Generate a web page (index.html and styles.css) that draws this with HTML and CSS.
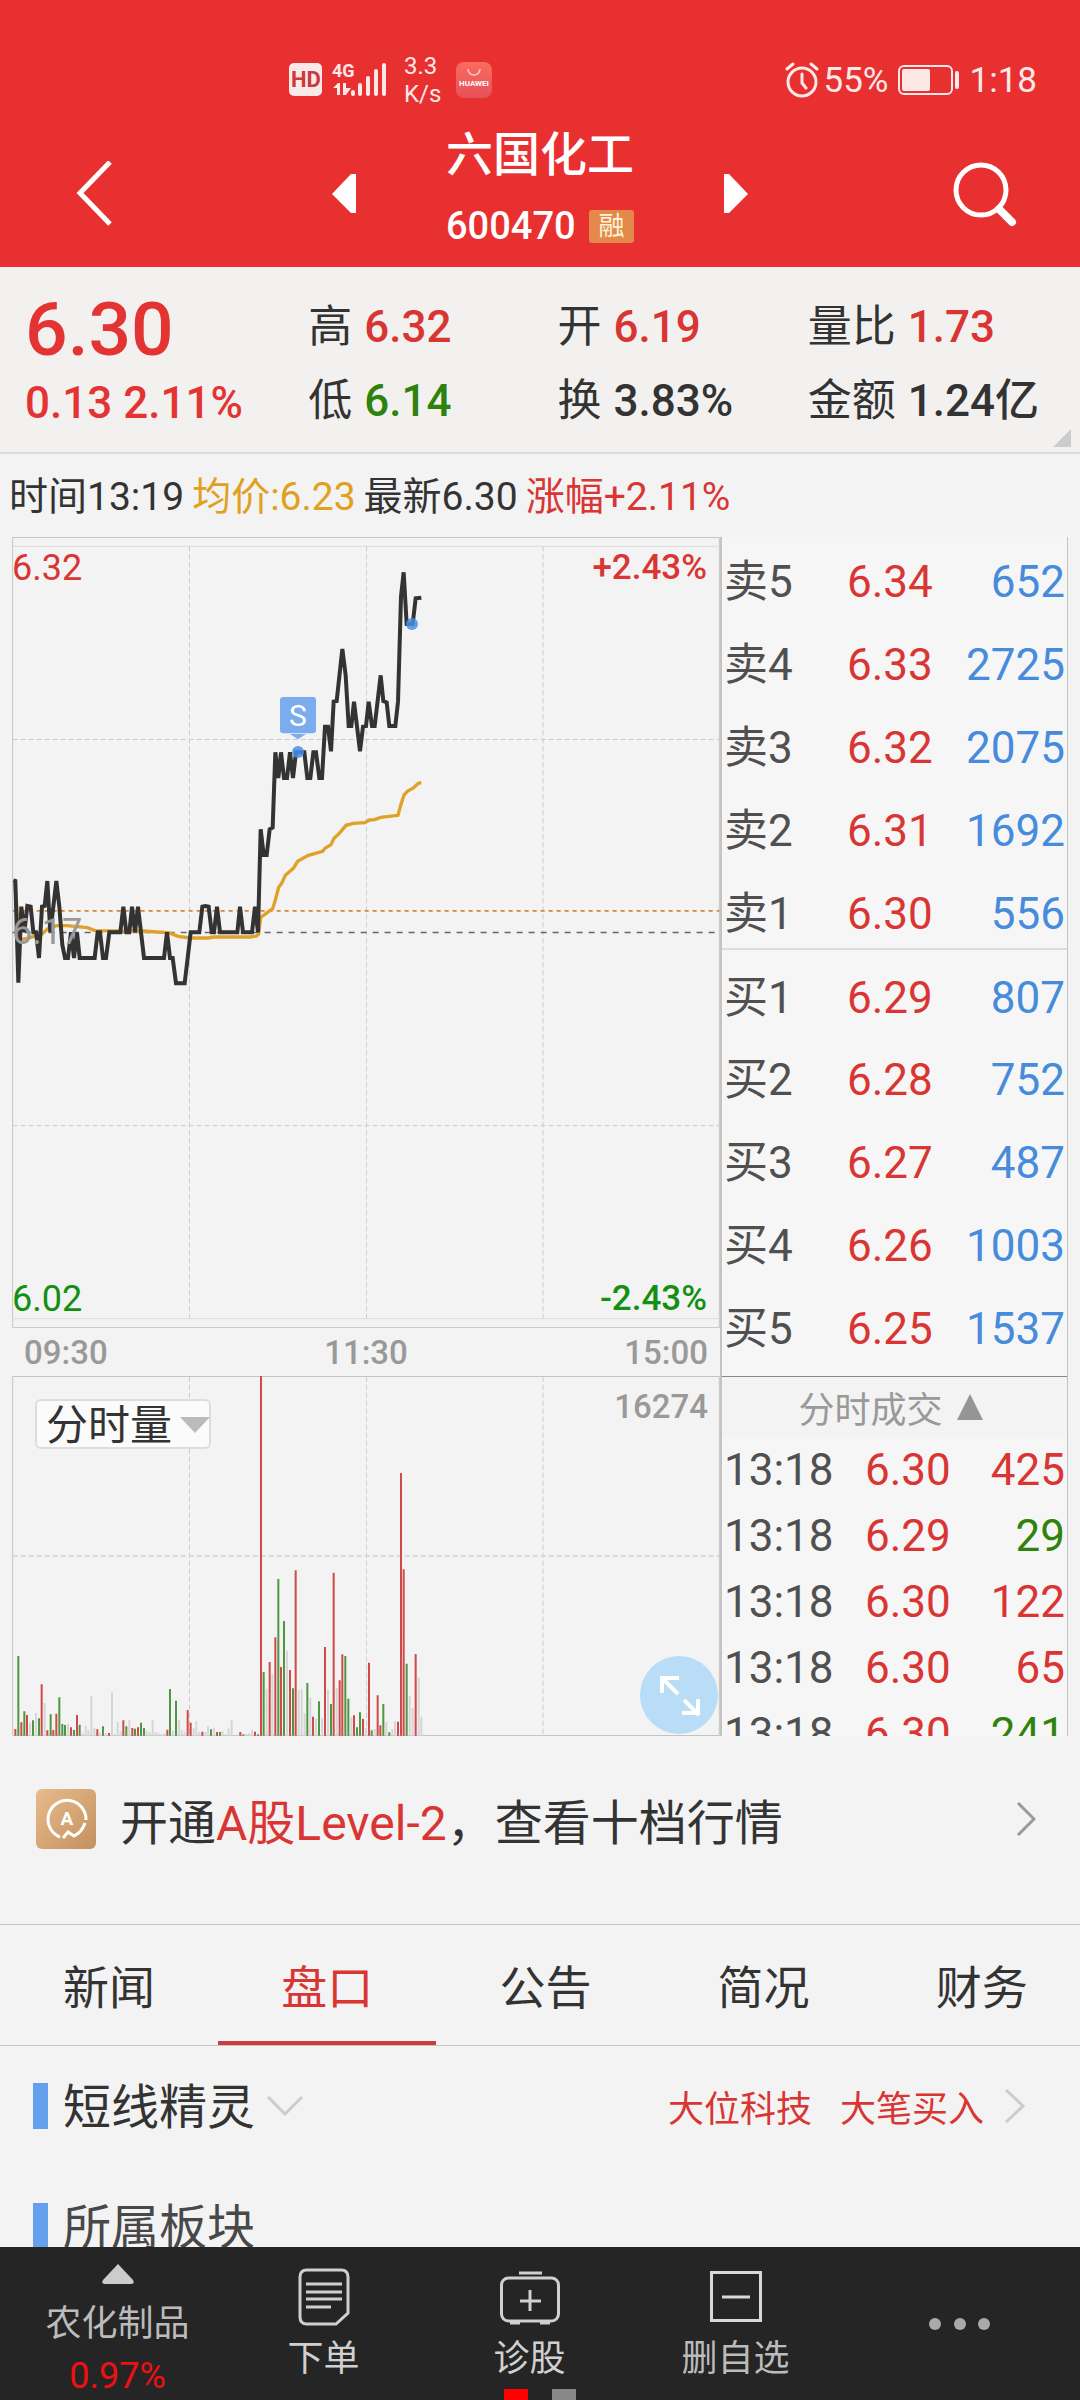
FILE: index.html
```html
<!DOCTYPE html>
<html lang="zh-CN">
<head>
<meta charset="utf-8">
<meta name="viewport" content="width=device-width">
<title>六国化工 600470</title>
<link rel="stylesheet" href="styles.css">
</head>
<body>
<header class="top">
  <div class="status">
    <div class="status-side">
      <svg class="net" width="98" height="36" viewBox="0 0 98 36" aria-hidden="true">
        <rect x="0" y="1" width="33" height="33" rx="5" fill="#fde8e8"/>
        <text x="17" y="25" class="hd" text-anchor="middle">HD</text>
        <text x="43" y="15" class="g4">4G</text>
        <g fill="#fde8e8">
          <path d="M44 26L49 21H51V33H48V26ZM54 21H57V26H62L57 33H54Z"/>
          <rect x="62" y="28" width="4" height="6" rx="2"/>
          <rect x="69" y="21" width="4" height="13" rx="2"/>
          <rect x="77" y="14" width="4" height="20" rx="2"/>
          <rect x="85" y="7" width="4" height="27" rx="2"/>
          <rect x="93" y="1" width="4" height="33" rx="2"/>
        </g>
      </svg>
      <span class="rate">3.3<br>K/s</span>
      <svg class="store" width="36" height="36" viewBox="0 0 36 36" aria-hidden="true">
        <defs><linearGradient id="store" x1="0" y1="0" x2="0" y2="1"><stop offset="0" stop-color="#fb6b5e"/><stop offset="1" stop-color="#e6505a"/></linearGradient></defs>
        <rect width="36" height="36" rx="8" fill="url(#store)"/>
        <path d="M12 7a6 6 0 0 0 12 0" fill="none" stroke="#fcc" stroke-width="1.5"/>
        <text x="18" y="24" class="brand" text-anchor="middle">HUAWEI</text>
      </svg>
    </div>
    <div class="status-side">
      <svg width="34" height="36" viewBox="0 0 34 36" fill="none" stroke="#fde8e8" stroke-width="3" stroke-linecap="round" aria-hidden="true">
        <circle cx="17" cy="20" r="14"/><path d="M17 12v9l4 5M2 7l6-5M32 7l-6-5"/>
      </svg>
      <span class="pct">55%</span>
      <svg class="batt" width="61" height="30" viewBox="0 0 61 30" aria-hidden="true">
        <rect x="1" y="1" width="53" height="28" rx="5" fill="none" stroke="#fde8e8" stroke-width="2"/>
        <rect x="4" y="4" width="28" height="22" rx="2" fill="#fde8e8"/><rect x="57" y="6" width="4" height="18" rx="2" fill="#fde8e8"/>
      </svg>
      <span class="clock">1:18</span>
    </div>
  </div>
  <div class="titlebar">
    <button class="corner" aria-label="返回"><svg width="40" height="66" viewBox="0 0 40 66" fill="none" stroke="#fff" stroke-width="5"><path d="M35 1L5 32L35 63"/></svg></button>
    <div class="switcher">
      <button aria-label="上一只"><svg width="24" height="39" viewBox="0 0 24 39"><path d="M24 0V39H19L0 20L19 0Z" fill="#fff"/></svg></button>
      <div class="title">
        <h1>六国化工</h1>
        <p>600470<span class="tag">融</span></p>
      </div>
      <button aria-label="下一只"><svg width="24" height="39" viewBox="0 0 24 39"><path d="M0 0V39H5L24 20L5 0Z" fill="#fff"/></svg></button>
    </div>
    <button class="corner" aria-label="搜索"><svg width="64" height="68" viewBox="0 0 64 68" fill="none" stroke="#fff"><circle cx="28" cy="30" r="25" stroke-width="5"/><path d="M46 49L59 62" stroke-width="8" stroke-linecap="round"/></svg></button>
  </div>
</header>

<main>
  <section class="quote">
    <div class="last"><strong>6.30</strong><span>0.13 2.11%</span></div>
    <dl><div><dt>高</dt><dd class="up">6.32</dd></div><div><dt>低</dt><dd class="down">6.14</dd></div></dl>
    <dl><div><dt>开</dt><dd class="up">6.19</dd></div><div><dt>换</dt><dd>3.83%</dd></div></dl>
    <dl><div><dt>量比</dt><dd class="up">1.73</dd></div><div><dt>金额</dt><dd>1.24亿</dd></div></dl>
    <i class="fold"></i>
  </section>

  <p class="info"><span>时间13:19</span><span class="avg">均价:6.23</span><span>最新6.30</span><span class="up">涨幅+2.11%</span></p>

  <section class="market">
    <div class="charts">
      <div class="price">
        <svg class="plot" viewBox="36 21 2124 2373" preserveAspectRatio="none" aria-label="分时走势">
          <g fill="none" stroke-width="3">
            <path d="M38 22.500V2393H2158V22.500Z" stroke="#c4c4c4"/>
            <path d="M38 49H2158M38 2366H2158" stroke="#dcdcdc"/>
            <path d="M38 628.500H2158M38 1787H2158M568.500 49V2366M1099.500 49V2366M1629.500 49V2366" stroke="#ccc" stroke-dasharray="15 9"/>
            <path d="M38 1142.500H2158" stroke="#d9853b" stroke-width="5" stroke-dasharray="12 12"/>
            <path d="M38 1207.500H2158" stroke="#666" stroke-width="5" stroke-dasharray="18 18"/>
          </g>
          <polyline class="avg-line" points="44,1053 52,1150 58,1230 80,1225 125,1213 145,1195 170,1187 200,1187 262,1193 285,1202 430,1203 470,1206 505,1208 535,1219 570,1224 625,1224 640,1221 750,1221 770,1218 776,1212 782,1162 818,1136 826,1110 836,1072 845,1060 856,1036 880,1015 893,994 925,976 968,964 976,954 993,944 1002,925 1018,910 1038,886 1060,880 1095,878 1108,870 1124,869 1142,862 1194,856 1202,826 1212,795 1222,784 1240,774 1255,760 1264,758"/>
          <polyline class="price-line" points="40,1051 46,1053 55,1358 64,1130 73,1207 82,1128 92,1130 100,1207 108,1207 117,1284 126,1130 134,1128 142,1053 151,1207 160,1130 169,1053 178,1130 187,1245 195,1284 204,1284 213,1207 222,1284 231,1207 239,1284 284,1284 293,1207 300,1207 309,1284 318,1284 328,1207 361,1207 370,1130 379,1207 388,1207 396,1130 405,1207 414,1130 423,1207 432,1284 492,1284 501,1207 510,1284 518,1284 528,1360 554,1360 563,1284 572,1207 598,1207 607,1130 616,1128 626,1130 635,1207 642,1207 651,1130 660,1207 712,1207 720,1130 729,1207 756,1207 765,1130 774,1207 782,898 791,975 800,975 809,898 818,893 826,667 835,744 843,667 852,744 861,744 870,667 879,744 888,667 913,667 922,744 931,744 940,667 948,667 958,744 966,744 975,590 984,590 993,664 1001,515 1010,513 1027,357 1037,436 1046,588 1054,588 1062,515 1080,664 1089,590 1098,588 1106,515 1116,588 1124,588 1142,436 1150,513 1160,517 1168,588 1186,588 1194,515 1203,200 1211,127 1220,282 1238,282 1247,205 1264,203"/>
          <g fill="#4a8fe3" fill-opacity=".85"><circle cx="894" cy="666" r="18"/><circle cx="1236" cy="282" r="18"/></g>
          <rect x="840" y="501" width="108" height="109" rx="10" fill="#7aacee"/><path d="M870 612H918L894 628Z" fill="#7aacee"/>
          <text x="894" y="588" class="flag" text-anchor="middle">S</text>
        </svg>
        <span class="lab high up">6.32</span><span class="lab high end up">+2.43%</span>
        <span class="lab mid">6.17</span>
        <span class="lab low">6.02</span><span class="lab low end">-2.43%</span>
      </div>
      <div class="axis"><span>09:30</span><span>11:30</span><span>15:00</span></div>
      <div class="volume">
        <svg class="plot" viewBox="36 348 2124 1080" preserveAspectRatio="none" aria-label="成交量">
          <g fill="none" stroke-width="3">
            <path d="M38 349.500V1426.500H2158V349.500Z" stroke="#c4c4c4"/>
            <path d="M568.500 350V1426M1099.500 350V1426M1629.500 350V1426" stroke="#ccc" stroke-dasharray="15 9"/>
            <path d="M38 888H2158" stroke="#d4d4d4" stroke-width="5" stroke-dasharray="15 9"/>
          </g>
          <g fill="none" stroke-width="6">
            <path stroke="#d6d6d6" d="M90 1427V1388M108 1427V1359M134 1427V1329M204 1427V1392M248 1427V1420M257 1427V1397M265 1427V1410M274 1427V1308M283 1427V1403M300 1427V1418M318 1427V1420M336 1427V1297M345 1427V1423M353 1427V1385M362 1427V1414M388 1427V1381M440 1427V1412M449 1427V1416M458 1427V1380M467 1427V1416M475 1427V1420M484 1427V1422M493 1427V1420M519 1427V1413M537 1427V1380M545 1427V1410M554 1427V1415M581 1427V1405M589 1427V1384M598 1427V1415M616 1427V1416M624 1427V1399M642 1427V1404M668 1427V1414M677 1427V1422M686 1427V1405M695 1427V1379M712 1427V1423M739 1427V1422M747 1427V1419M756 1427V1410M800 1427V1286M817 1427V1242M861 1427V1172M896 1427V1290M905 1427V1288M914 1427V1360M931 1427V1314M948 1427V1376M966 1427V1374M984 1427V1290M1010 1427V1284M1054 1427V1370M1098 1427V1404M1124 1427V1407M1159 1427V1385M1177 1427V1407M1185 1427V1384M1229 1427V1309M1238 1427V1344M1256 1427V1252M1264 1427V1370"/>
            <path stroke="#cf4a48" d="M46 1427V1407M64 1427V1387M81 1427V1365M125 1427V1273M142 1427V1411M160 1427V1410M169 1427V1361M213 1427V1402M231 1427V1365M292 1427V1408M327 1427V1419M370 1427V1381M397 1427V1404M414 1427V1402M502 1427V1409M563 1427V1350M572 1427V1388M607 1427V1415M651 1427V1416M721 1427V1416M765 1427V1415M783 1427V348M809 1427V1206M826 1427V1132M843 1427V1221M870 1427V1230M887 1427V931M939 1427V1370M975 1427V1161M1001 1427V938M1019 1427V1261M1027 1427V1183M1062 1427V1366M1089 1427V1377M1107 1427V1208M1133 1427V1306M1141 1427V1396M1194 1427V1385M1203 1427V639M1211 1427V928M1247 1427V1182"/>
            <path stroke="#4f9642" d="M55 1427V1188M73 1427V1354M99 1427V1381M117 1427V1375M152 1427V1363M178 1427V1312M187 1427V1392M195 1427V1395M222 1427V1410M239 1427V1394M309 1427V1399M379 1427V1399M405 1427V1406M423 1427V1388M432 1427V1404M510 1427V1287M528 1427V1322M633 1427V1408M660 1427V1416M730 1427V1423M774 1427V1423M791 1427V1236M835 1427V957M852 1427V1083M879 1427V1285M922 1427V1269M957 1427V1324M993 1427V1332M1036 1427V1188M1045 1427V1316M1071 1427V1402M1080 1427V1357M1115 1427V1411M1150 1427V1332M1168 1427V1417M1220 1427V1211"/>
          </g>
        </svg>
        <select class="metric" aria-label="指标"><option>分时量</option></select>
        <span class="peak">16274</span>
        <button class="expand" aria-label="全屏"><svg width="78" height="78" viewBox="0 0 78 78" fill="none" stroke="#fff" stroke-width="4"><path d="M39 22H22V37M22 22L38 38M44 44L59 59M42 57H58V43"/></svg></button>
      </div>
    </div>

    <div class="depth">
      <div class="book-box">
        <table class="book">
          <tbody>
            <tr class="first"><th>卖5</th><td class="up">6.34</td><td>652</td></tr>
            <tr><th>卖4</th><td class="up">6.33</td><td>2725</td></tr>
            <tr><th>卖3</th><td class="up">6.32</td><td>2075</td></tr>
            <tr><th>卖2</th><td class="up">6.31</td><td>1692</td></tr>
            <tr><th>卖1</th><td class="up">6.30</td><td>556</td></tr>
          </tbody>
          <tbody class="bids">
            <tr><th>买1</th><td class="up">6.29</td><td>807</td></tr>
            <tr><th>买2</th><td class="up">6.28</td><td>752</td></tr>
            <tr><th>买3</th><td class="up">6.27</td><td>487</td></tr>
            <tr><th>买4</th><td class="up">6.26</td><td>1003</td></tr>
            <tr><th>买5</th><td class="up">6.25</td><td>1537</td></tr>
          </tbody>
        </table>
      </div>
      <button class="deals-head">分时成交<svg width="26" height="26" viewBox="0 0 26 26"><path d="M13 0L26 26H0Z" fill="#959595"/></svg></button>
      <div class="deals-clip">
        <table class="deals">
          <tr><th>13:18</th><td class="up">6.30</td><td class="up">425</td></tr>
          <tr><th>13:18</th><td class="up">6.29</td><td class="down">29</td></tr>
          <tr><th>13:18</th><td class="up">6.30</td><td class="up">122</td></tr>
          <tr><th>13:18</th><td class="up">6.30</td><td class="up">65</td></tr>
          <tr><th>13:18</th><td class="up">6.30</td><td class="down">241</td></tr>
        </table>
      </div>
    </div>
  </section>

  <a class="promo" href="#level2">
    <svg width="60" height="60" viewBox="0 0 60 60" aria-hidden="true">
      <defs><linearGradient id="gold" x1="0" y1="0" x2="1" y2="1"><stop offset="0" stop-color="#e8bb8c"/><stop offset="1" stop-color="#c49160"/></linearGradient></defs>
      <rect width="60" height="60" rx="6" fill="url(#gold)"/>
      <path d="M24 48A19 19 0 1 1 50 31M49 34Q46 43 38 47L32 43L27 49" fill="none" stroke="#fff" stroke-width="3"/>
      <text x="31" y="36" class="badge-a" text-anchor="middle">A</text>
    </svg>
    <span>开通<em>A股Level-2</em>，查看十档行情</span>
    <svg class="go" width="20" height="34" viewBox="0 0 20 34" fill="none" stroke="#999" stroke-width="3"><path d="M2 1L18 17L2 33"/></svg>
  </a>

  <nav class="tabs">
    <a href="#news">新闻</a><a href="#book" class="on">盘口</a><a href="#notice">公告</a><a href="#brief">简况</a><a href="#finance">财务</a>
  </nav>

  <section class="block">
    <h2>短线精灵</h2>
    <svg width="36" height="20" viewBox="0 0 36 20" fill="none" stroke="#ccc" stroke-width="3"><path d="M1 1L18 18L35 1"/></svg>
    <a class="signal" href="#signal"><span>大位科技</span><span>大笔买入</span>
      <svg width="22" height="34" viewBox="0 0 22 34" fill="none" stroke="#ccc" stroke-width="3"><path d="M2 1L19 17L2 33"/></svg></a>
  </section>
  <section class="block dim"><h2>所属板块</h2></section>
</main>

<footer class="bar">
  <button class="sector">
    <svg width="32" height="20" viewBox="0 0 32 20"><path d="M16 0L31 16Q33 20 29 20H3Q-1 20 1 16Z" fill="#ccc"/></svg>
    <span>农化制品</span><b>0.97%</b>
  </button>
  <button>
    <svg width="60" height="60" viewBox="0 0 60 60" fill="none" stroke="#d0d0d0" stroke-width="3"><path d="M13 3H47Q54 3 54 10V46L42 57H13Q6 57 6 50V10Q6 3 13 3ZM12 17H48M12 25H48M12 32H48M12 40H37"/></svg>
    <span>下单</span>
  </button>
  <button>
    <svg width="60" height="60" viewBox="0 0 60 60" fill="none" stroke="#d0d0d0" stroke-width="3"><rect x="1.500" y="11" width="57" height="43" rx="7"/><path d="M19 6H42M30 23V44M20 34H41M10 56H20M40 56H50"/></svg>
    <span>诊股</span>
  </button>
  <button class="muted">
    <svg width="60" height="60" viewBox="0 0 60 60" fill="none" stroke="#d8d8d8" stroke-width="3"><path d="M5.500 5.500H54.500V53.500H5.500ZM16 30H44"/></svg>
    <span>删自选</span>
  </button>
  <button aria-label="更多" class="more"><svg width="64" height="14" viewBox="0 0 64 14" fill="#aaa"><circle cx="7" cy="7" r="6"/><circle cx="32" cy="7" r="6"/><circle cx="56" cy="7" r="6"/></svg></button>
  <div class="pager"><i></i><i></i></div>
</footer>
</body>
</html>
```
FILE: styles.css
```css
* { box-sizing: border-box; margin: 0; padding: 0; }

body {
  display: flex;
  flex-direction: column;
  height: 100vh;
  background: #f3f3f3;
  color: #333;
  font-family: Roboto, "Noto Sans CJK SC", sans-serif;
}

button, select { border: 0; background: none; color: inherit; font: inherit; }
button { display: flex; align-items: center; justify-content: center; }
a { color: inherit; text-decoration: none; }
em, i { font-style: normal; }
svg { flex: none; display: block; }
.up { color: #d93533; }
.down { color: #2f820c; }

/* status bar and title */
.top { flex: none; background: #e93031; color: #fff; }
.status {
  display: flex;
  align-items: center;
  justify-content: space-between;
  height: 120px;
  padding: 40px 43px 0 289px;
  color: #fde8e8;
  font-size: 35px;
}
.status-side { display: flex; align-items: center; }
.net { overflow: visible; }
.hd { font: bold 22px Roboto, sans-serif; fill: #c93a3c; }
.g4 { font: bold 18px Roboto, sans-serif; fill: #fde8e8; }
.brand { font: bold 8px Roboto, sans-serif; fill: #fff; }
.rate { margin-left: 17px; font-size: 24px; line-height: 28px; }
.store { margin-left: 15px; }
.pct { margin-left: 5px; }
.batt { margin: 0 11px 0 9px; }

.titlebar { display: flex; align-items: center; height: 147px; }
.corner { width: 190px; height: 147px; }
.switcher { flex: 1; display: flex; align-items: center; justify-content: center; gap: 90px; }
.title { padding-bottom: 3px; }
.title h1 { font-size: 47px; font-weight: 500; line-height: 68px; }
.title p {
  display: flex;
  align-items: center;
  justify-content: space-between;
  height: 75px;
  font-size: 38px;
  font-weight: 500;
}
.tag {
  width: 45px;
  border-radius: 3px;
  background: #e38a4a;
  color: #fff3d8;
  font-size: 26px;
  font-weight: 400;
  line-height: 33px;
  text-align: center;
}

main { flex: 1; min-height: 0; overflow-y: auto; scrollbar-width: none; }

/* headline numbers */
.quote {
  position: relative;
  display: grid;
  grid-template-columns: 283fr 249fr 250fr 272fr;
  height: 187px;
  padding: 23px 0 0 25px;
  border-bottom: 2px solid #ddd;
  background: #f2f1ef;
}
.last { color: #e33333; font-weight: 500; }
.last strong { display: block; font-size: 75px; font-weight: 500; line-height: 78px; }
.last span { font-size: 44px; line-height: 70px; }
.quote dl div { display: flex; gap: 12px; font-size: 44px; line-height: 74px; }
.quote dd { font-weight: 500; }
.fold { position: absolute; right: 9px; bottom: 5px; border: 9px solid; border-color: transparent #ccc #ccc transparent; }

.info { display: flex; gap: 8px; height: 83px; padding-left: 9px; font-size: 39px; line-height: 87px; }
.avg { color: #e0a020; }

/* charts and depth */
.market { display: grid; grid-template-columns: 708fr 348fr; height: 1199px; margin: 0 12px; }
.charts { display: flex; flex-direction: column; }
.price { position: relative; height: 791px; }
.volume { position: relative; height: 360px; }
.plot { width: 100%; height: 100%; }
.avg-line { fill: none; stroke: #e0a12b; stroke-width: 10; }
.price-line { fill: none; stroke: #333; stroke-width: 12; }
.flag { font: 90px Roboto, sans-serif; fill: #fff; }
.lab { position: absolute; left: 0; font-size: 36px; line-height: 40px; }
.lab.end { left: auto; right: 13px; font-size: 35px; font-weight: 500; }
.high { top: 11px; }
.mid { top: 375px; color: #999; }
.low { bottom: 9px; color: #129012; }
.axis {
  display: flex;
  align-items: center;
  justify-content: space-between;
  height: 48px;
  padding: 0 12px;
  color: #999;
  font-size: 33px;
  font-weight: 500;
}
.peak { position: absolute; top: 11px; right: 12px; color: #999; font-size: 33px; font-weight: 500; line-height: 40px; }
.metric {
  position: absolute;
  top: 23px;
  left: 23px;
  width: 176px;
  height: 50px;
  padding: 4px 0 0 9px;
  border: 2px solid #ddd;
  border-radius: 6px;
  appearance: none;
  background: #fbfbfb;
  font-size: 42px;
  line-height: 42px;
}
.volume::after {
  content: "";
  position: absolute;
  top: 41px;
  left: 168px;
  border: 15px solid transparent;
  border-top: 16px solid #bbb;
  border-bottom: 0;
  pointer-events: none;
}
.expand { position: absolute; right: 2px; bottom: 2px; width: 78px; height: 78px; border-radius: 50%; background: #b9ddf6; }

.depth {
  display: flex;
  flex-direction: column;
  height: 1199px;
  border: 0 solid #c4c4c4;
  border-width: 0 1px 0 2px;
  background: #f6f6f6;
  font-size: 44px;
}
.depth table { width: 100%; border-collapse: collapse; table-layout: fixed; }
.depth th { padding-left: 2px; color: #505050; font-weight: 400; text-align: left; }
.depth td:last-child { padding-right: 2px; text-align: right; }
.book-box { flex: none; height: 840px; border-bottom: 1px solid #888; }
.book tr { height: 83px; line-height: 60px; }
.book .first { height: 80px; }
.book th, .book td { padding-top: 13px; }
.book .first th, .book .first td { padding-top: 10px; }
.book th { width: 125px; }
.book td:last-child { color: #478bdd; }
.bids { border-top: 2px solid #ddd; }
.deals-head { flex: none; gap: 14px; width: 100%; height: 60px; padding-right: 8px; background: #f3f3f3; color: #999; font-size: 36px; }
.deals-clip { flex: 1; min-height: 0; overflow: hidden; }
.deals tr { height: 66px; }
.deals th { width: 143px; }

/* level-2 link */
.promo {
  display: flex;
  align-items: center;
  height: 189px;
  padding: 0 44px 22px 36px;
  border-bottom: 1px solid #c4c4c4;
  font-size: 48px;
}
.promo span { margin-left: 24px; }
.promo em { color: #d93533; }
.badge-a { font: bold 19px Roboto, sans-serif; fill: #fff; }
.go { margin-left: auto; }

/* the strip of tabs runs slightly past the right edge */
.tabs { display: grid; grid-template-columns: repeat(5, 20.2%); overflow: hidden; border-bottom: 1px solid #c4c4c4; }
.tabs a { height: 120px; font-size: 46px; line-height: 126px; text-align: center; }
.tabs .on { border-bottom: 4px solid #cc3c3c; color: #d93533; }

.block { display: flex; align-items: center; height: 120px; padding: 0 54px 0 33px; }
.block h2 { margin-right: 12px; padding: 4px 0 0 15px; border-left: 15px solid #65a0ee; font-size: 48px; font-weight: 400; line-height: 42px; }
.dim h2 { color: #484848; }
.signal { display: flex; align-items: center; gap: 28px; margin-left: auto; color: #d93533; font-size: 36px; }
.signal svg { margin-left: -8px; }

/* bottom actions */
.bar {
  position: relative;
  flex: none;
  display: grid;
  grid-template-columns: 220fr 206fr 206fr 206fr 242fr;
  height: 153px;
  background: #252525;
  color: #d0d0d0;
  font-size: 36px;
}
.bar button { flex-direction: column; justify-content: flex-start; padding: 20px 0 0 1px; line-height: 64px; }
.bar .sector { padding: 17px 0 0 15px; }
.sector span { line-height: 80px; }
.sector b { color: #ee1111; font-weight: 400; line-height: 24px; }
.bar .muted, .sector span { color: #bbb; }
.bar .more { padding-top: 70px; }
.pager { position: absolute; bottom: 0; left: 50%; display: flex; gap: 24px; transform: translateX(-50%); }
.pager i { width: 24px; height: 11px; background: #888; }
.pager i:first-child { background: #f00; }
```
